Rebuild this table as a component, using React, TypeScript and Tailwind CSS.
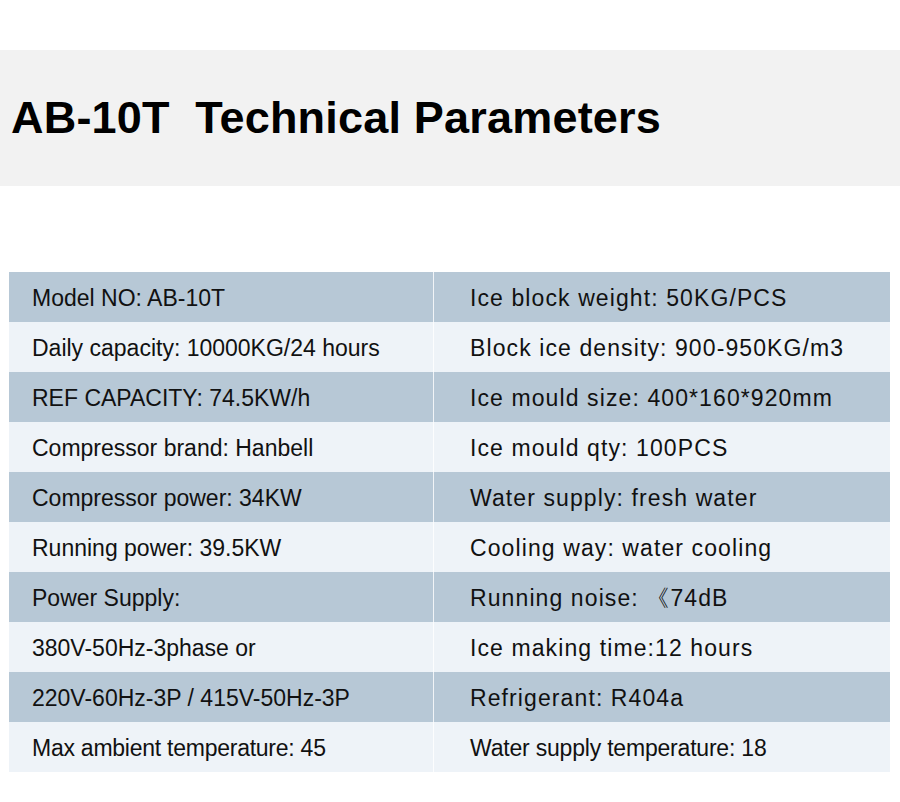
const rows: [string, string][] = [
  ["Model NO: AB-10T", "Ice block weight: 50KG/PCS"],
  ["Daily capacity: 10000KG/24 hours", "Block ice density: 900-950KG/m3"],
  ["REF CAPACITY: 74.5KW/h", "Ice mould size: 400*160*920mm"],
  ["Compressor brand: Hanbell", "Ice mould qty: 100PCS"],
  ["Compressor power: 34KW", "Water supply: fresh water"],
  ["Running power: 39.5KW", "Cooling way: water cooling"],
  ["Power Supply:", "Running noise: 《74dB"],
  ["380V-50Hz-3phase or", "Ice making time:12 hours"],
  ["220V-60Hz-3P / 415V-50Hz-3P", "Refrigerant: R404a"],
  ["Max ambient temperature: 45", "Water supply temperature: 18"],
];

export default function App() {
  return (
    <div className="w-[900px] h-[802px] bg-white font-['Liberation_Sans',Arial,sans-serif] text-[#111]">
      <div className="h-[50px]" />
      <div className="h-[136px] bg-[#f2f2f2] flex items-center pl-[11px]">
        <h1 className="text-[45px] font-bold text-black leading-none whitespace-pre tracking-[0.2px] pb-[2px]">
          AB-10T  Technical Parameters
        </h1>
      </div>
      <div className="h-[86px]" />
      <div className="ml-[9px] w-[881px]">
        {rows.map(([l, r], i) => {
          const last = i === rows.length - 1;
          return (
            <div
              key={i}
              className={
                "grid grid-cols-[424px_1px_456px] h-[50px] " +
                (i % 2 === 0 ? "bg-[#b7c8d6]" : "bg-[#eef3f8]")
              }
            >
              <div
                className={
                  "flex items-center pl-[23px] pt-[2px] text-[23px] whitespace-nowrap " +
                  (last ? "tracking-[-0.25px]" : "")
                }
              >
                {l}
              </div>
              <div className="bg-white/80" />
              <div
                className={
                  "flex items-center pl-[36px] pt-[2px] text-[23px] whitespace-nowrap " +
                  (last ? "tracking-[-0.2px]" : "tracking-[1.1px]")
                }
              >
                {r}
              </div>
            </div>
          );
        })}
      </div>
    </div>
  );
}
